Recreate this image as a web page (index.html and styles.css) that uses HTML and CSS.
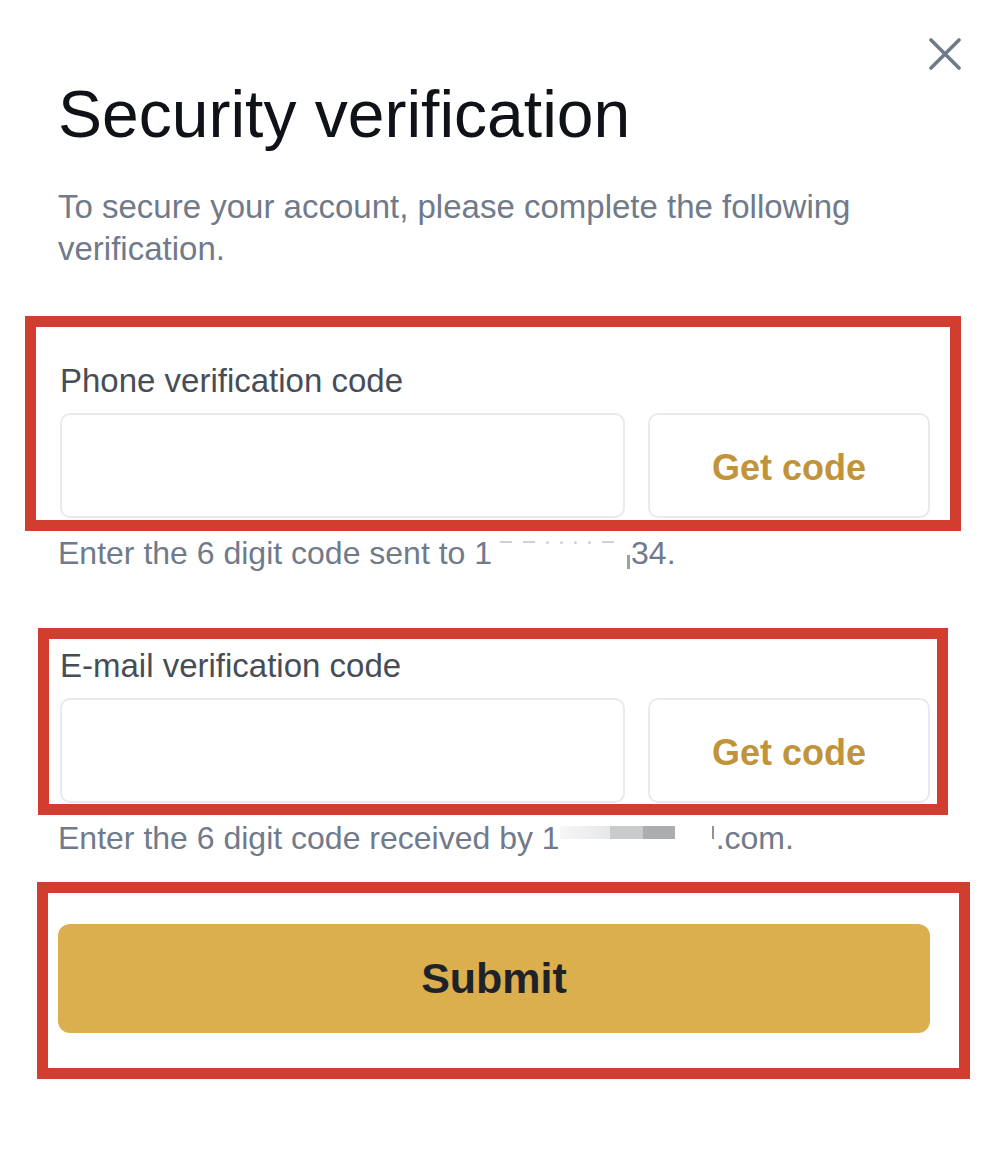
FILE: index.html
```html
<!DOCTYPE html>
<html lang="en">
<head>
<meta charset="utf-8">
<title>Security verification</title>
<link rel="stylesheet" href="styles.css">
</head>
<body>
<div class="modal">
  <div class="modal-head">
    <button class="close" aria-label="Close">
      <svg width="32" height="32" viewBox="0 0 32 32"><path d="M2 2 L30 30 M30 2 L2 30" stroke="#707A8A" stroke-width="3.6" stroke-linecap="round" fill="none"/></svg>
    </button>
  </div>
  <h1 class="title">Security verification</h1>
  <p class="subtitle">To secure your account, please complete the following verification.</p>

  <div class="field field-phone">
    <label class="label">Phone verification code</label>
    <div class="row">
      <div class="input"></div>
      <button class="get-code">Get code</button>
    </div>
    <span class="mark mark-phone"></span>
  </div>
  <p class="helper helper-phone">Enter the 6 digit code sent to 1<span class="masked-dots"><i class="d dash"></i><i class="d dash"></i><i class="d dot"></i><i class="d dot"></i><i class="d dot"></i><i class="d dot"></i><i class="d dash"></i><i class="d bar"></i></span>34.</p>

  <div class="field field-mail">
    <label class="label">E-mail verification code</label>
    <div class="row">
      <div class="input"></div>
      <button class="get-code">Get code</button>
    </div>
    <span class="mark mark-mail"></span>
  </div>
  <p class="helper helper-mail">Enter the 6 digit code received by 1<span class="blur"><span class="b1"></span><span class="b2"></span><span class="b3"></span><span class="tick"></span></span>.com.</p>

  <div class="field field-submit">
    <button class="submit">Submit</button>
    <span class="mark mark-submit"></span>
  </div>
</div>
</body>
</html>
```

FILE: styles.css
```css
* { box-sizing: border-box; }
html, body { margin: 0; padding: 0; background: #ffffff; }
body { font-family: "Liberation Sans", Arial, sans-serif; }

.modal {
  width: 994px;
  min-height: 1156px;
  padding: 0 64px 0 58px;
}

.modal-head {
  display: flex;
  justify-content: flex-end;
  padding-top: 38px;
  margin-right: -31px;
}
.close {
  border: 0;
  background: transparent;
  padding: 0;
  width: 32px;
  height: 32px;
  display: block;
}
.close svg { display: block; }

.title {
  margin: 4px 0 0 0;
  font-size: 66px;
  line-height: 80px;
  font-weight: 400;
  color: #0f1217;
}

.subtitle {
  margin: 32px 0 0 0;
  font-size: 33px;
  line-height: 42px;
  color: #707A8A;
  width: 820px;
}

.field { position: relative; }
.field-phone { margin-top: 91px; }
.field-mail { margin-top: 73px; }
.field-submit { margin-top: 66px; }

.label {
  display: block;
  padding-left: 2px;
  font-size: 33px;
  line-height: 40px;
  color: #474D57;
}

.row {
  display: flex;
  gap: 23px;
  margin-top: 12px;
  padding-left: 2px;
}
.input {
  flex: 0 0 565px;
  height: 105px;
  border: 2px solid #E8EAED;
  border-radius: 10px;
  background: #fff;
}
.get-code {
  flex: 1;
  height: 105px;
  border: 2px solid #E8EAED;
  border-radius: 10px;
  background: #fff;
  font-family: "Liberation Sans", Arial, sans-serif;
  font-weight: 700;
  font-size: 36px;
  color: #C1933A;
  padding: 4px 0 0 0;
}

.helper {
  margin: 15px 0 0 0;
  font-size: 32px;
  line-height: 40px;
  color: #707A8A;
  white-space: nowrap;
}
.masked-dots {
  display: inline-flex;
  align-items: flex-start;
  gap: 11px;
  width: 139px;
  height: 30px;
  padding: 8px 0 0 8px;
  vertical-align: top;
}
.masked-dots .d { display: block; background: #CDD1D6; }
.masked-dots .dash { width: 12px; height: 2px; }
.masked-dots .dot { width: 3px; height: 3px; border-radius: 50%; }
.masked-dots .bar { width: 3px; height: 14px; margin-top: 14px; margin-left: auto; margin-right: 1px; background: #9AA0A8; }

.blur {
  display: inline-flex;
  align-items: flex-start;
  vertical-align: top;
  padding-top: 8px;
  width: 156px;
  height: 30px;
}
.blur .b1 { width: 50px; height: 13px; background: linear-gradient(90deg, #F6F6F7, #E6E7E9); }
.blur .b2 { width: 33px; height: 13px; background: #C9CACD; }
.blur .b3 { width: 32px; height: 13px; background: #ABADB1; }
.blur .tick { width: 2px; height: 13px; background: #8E949C; margin-left: auto; margin-right: 2px; }

.submit {
  display: block;
  width: 872px;
  height: 109px;
  border: 0;
  border-radius: 12px;
  background: #DBAE4E;
  color: #1E2329;
  font-family: "Liberation Sans", Arial, sans-serif;
  font-weight: 700;
  font-size: 43px;
}

.mark {
  position: absolute;
  border: 11px solid #D13D2F;
  pointer-events: none;
}
.mark-phone { left: -33px; right: -31px; top: -45px; bottom: -13px; }
.mark-mail { left: -20px; right: -18px; top: -18px; bottom: -12px; }
.mark-submit { left: -21px; right: -40px; top: -42px; bottom: -46px; }
```
